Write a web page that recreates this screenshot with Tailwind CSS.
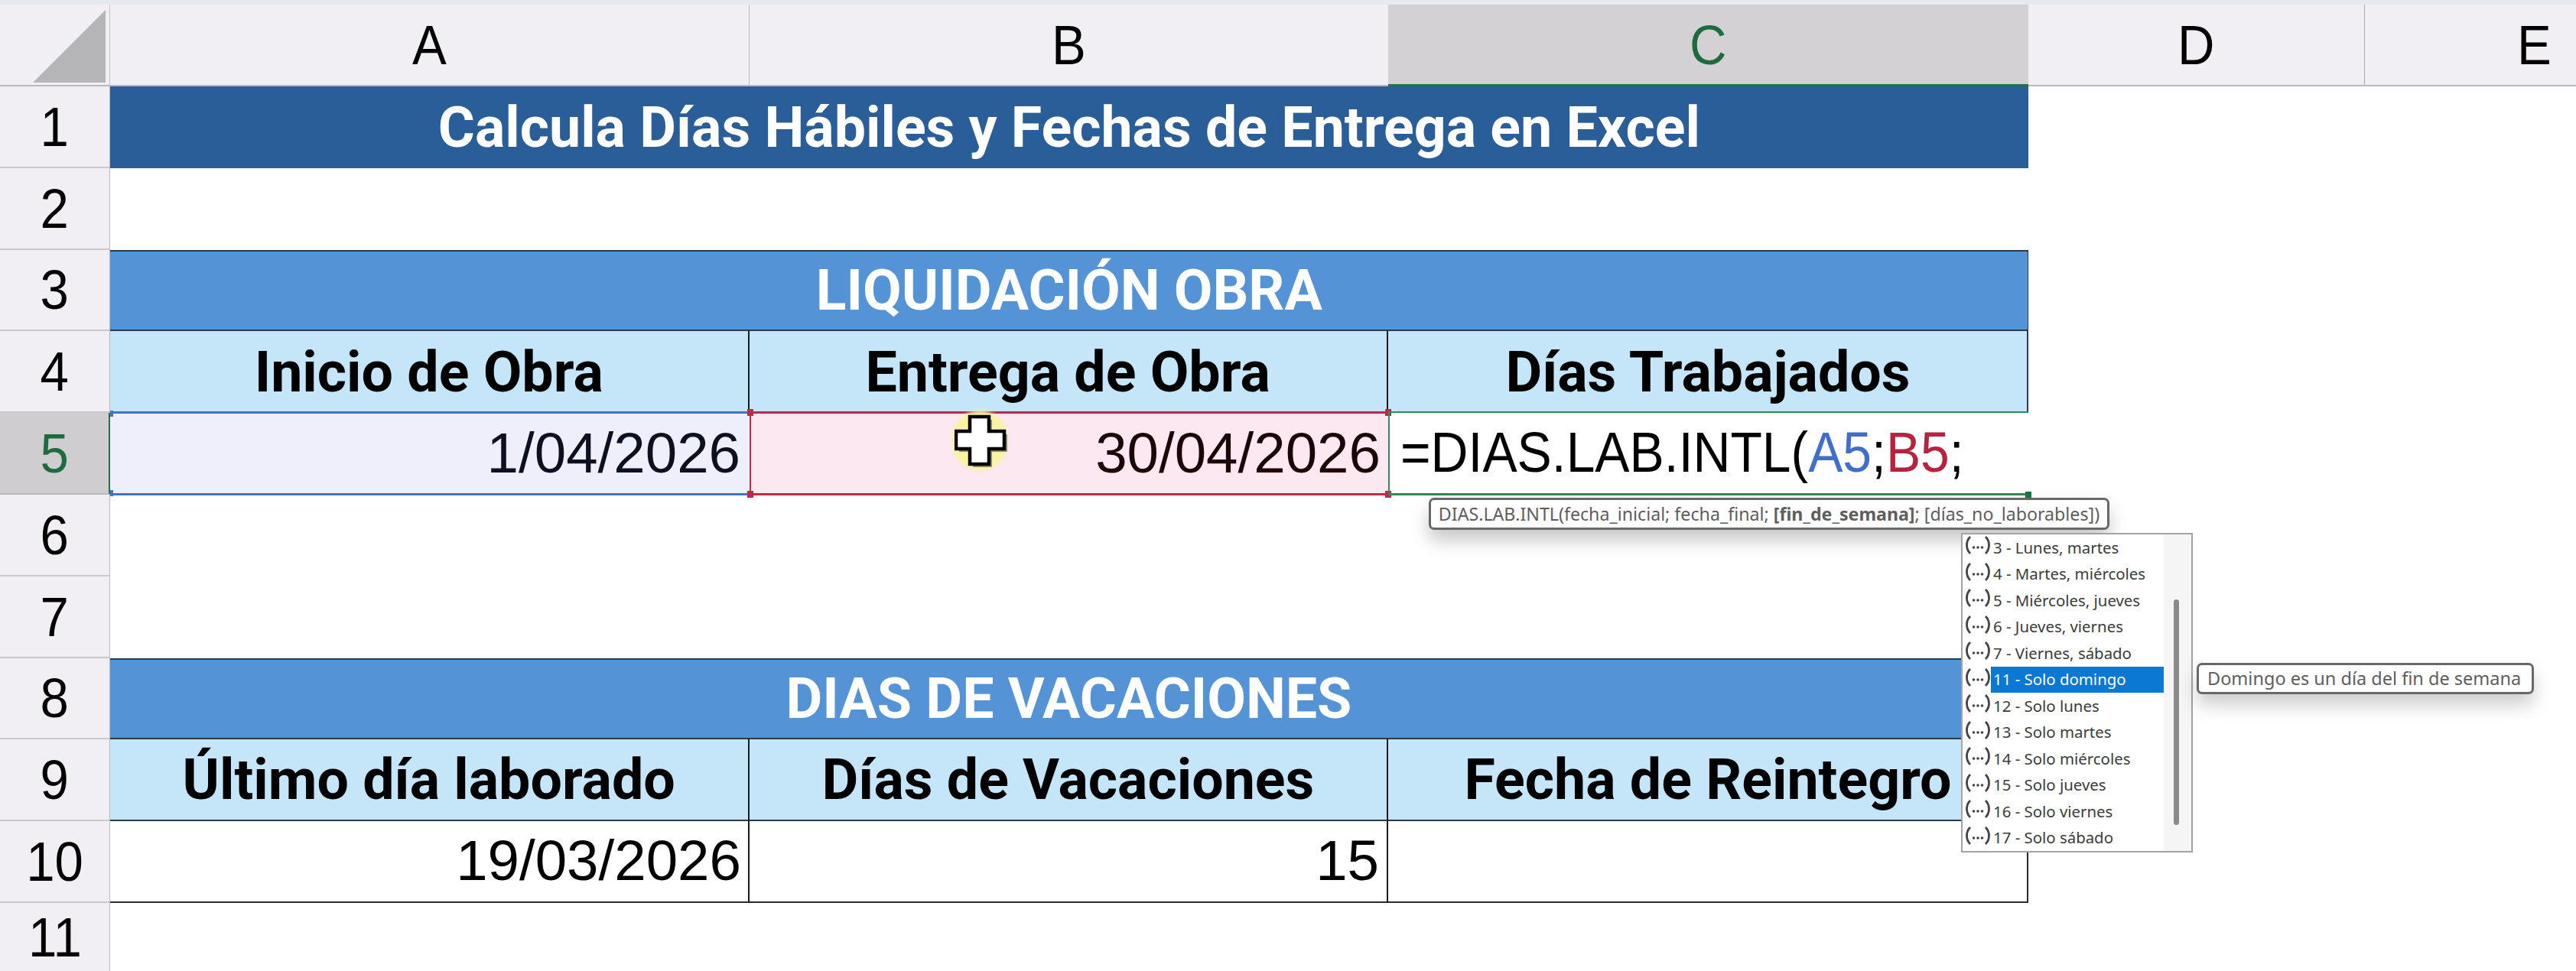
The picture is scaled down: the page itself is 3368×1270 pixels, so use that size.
<!DOCTYPE html>
<html lang="es">
<head>
<meta charset="UTF-8">
<title>Calcula Días Hábiles</title>
<script src="https://cdn.jsdelivr.net/npm/@tailwindcss/browser@4"></script>
</head>
<body class="bg-white overflow-hidden">
<svg class="hidden">
  <symbol id="fx" viewBox="0 0 34 24">
    <path d="M7 1C1 7 1 17 7 23M27 1C33 7 33 17 27 23" fill="none" stroke="#444" stroke-width="2.8"/>
    <circle cx="11.5" cy="15" r="1.8" fill="#444"/><circle cx="17" cy="15" r="1.8" fill="#444"/><circle cx="22.5" cy="15" r="1.8" fill="#444"/>
  </symbol>
</svg>

<div class="relative w-[3368px] h-[1270px] overflow-hidden">
  <!-- window edge above the column headers -->
  <div class="h-[6px] bg-[#e8e9f0]"></div>

  <!-- sheet -->
  <div class="grid grid-cols-[144px_836px_835px_837px_440px_442px] grid-rows-[107px_repeat(10,106.8px)_90px] font-['Liberation_Sans',sans-serif] text-[73px] leading-none text-black">
    <!-- column headers -->
    <div class="relative bg-[#f1eff3] border-b-2 border-b-[#b9b9bb] border-r border-r-[#c4c4c6]">
      <svg class="absolute left-[43px] top-[7px]" width="96" height="96" viewBox="0 0 96 96"><path d="M0 95L95 0V95Z" fill="#b6b5b7"/></svg>
    </div>
    <div class="flex items-center justify-center bg-[#f1eff3] border-b-2 border-b-[#b9b9bb] border-r border-r-[#bdbdbf]"><span class="scale-x-[0.92]">A</span></div>
    <div class="flex items-center justify-center bg-[#f1eff3] border-b-2 border-b-[#b9b9bb]"><span class="scale-x-[0.92]">B</span></div>
    <div class="flex items-center justify-center bg-[#d3d1d4] border-b-[3px] border-b-[#217346] text-[#1f6b3f]"><span class="scale-x-[0.92]">C</span></div>
    <div class="flex items-center justify-center bg-[#f1eff3] border-b-2 border-b-[#b9b9bb] border-r border-r-[#a9a9ab]"><span class="scale-x-[0.92]">D</span></div>
    <div class="flex items-center justify-center bg-[#f1eff3] border-b-2 border-b-[#b9b9bb]"><span class="scale-x-[0.92]">E</span></div>

    <!-- row 1 -->
    <div class="flex items-center justify-center bg-[#f1eff3] border-b-2 border-b-[#c9c9cb] border-r border-r-[#b9b9bb]"><span class="scale-x-[0.92]">1</span></div>
    <div class="col-span-3 flex items-center justify-center bg-[#2a5e98] text-white font-['Roboto',sans-serif] font-bold text-[75px]"><span class="whitespace-nowrap scale-x-[0.98]">Calcula Días Hábiles y Fechas de Entrega en Excel</span></div>
    <div class="col-span-2"></div>

    <!-- row 2 -->
    <div class="flex items-center justify-center bg-[#f1eff3] border-b-2 border-b-[#c9c9cb] border-r border-r-[#b9b9bb]"><span class="scale-x-[0.92]">2</span></div>
    <div class="col-span-5"></div>

    <!-- row 3 -->
    <div class="flex items-center justify-center bg-[#f1eff3] border-b-2 border-b-[#c9c9cb] border-r border-r-[#b9b9bb]"><span class="scale-x-[0.92]">3</span></div>
    <div class="col-span-3 flex items-center justify-center bg-[#5593d7] text-white font-['Roboto',sans-serif] font-bold text-[75px] border-y-2 border-r border-[#2b3a4a]"><span class="whitespace-nowrap scale-x-[0.98]">LIQUIDACIÓN OBRA</span></div>
    <div class="col-span-2"></div>

    <!-- row 4 -->
    <div class="flex items-center justify-center bg-[#f1eff3] border-b-2 border-b-[#c9c9cb] border-r border-r-[#b9b9bb]"><span class="scale-x-[0.92]">4</span></div>
    <div class="flex items-center justify-center bg-[#c5e6f8] font-['Roboto',sans-serif] font-bold text-[75px] border-r-2 border-r-[#1a1a1a]"><span class="whitespace-nowrap scale-x-[0.98]">Inicio de Obra</span></div>
    <div class="flex items-center justify-center bg-[#c5e6f8] font-['Roboto',sans-serif] font-bold text-[75px] border-r-2 border-r-[#1a1a1a]"><span class="whitespace-nowrap scale-x-[0.98]">Entrega de Obra</span></div>
    <div class="flex items-center justify-center bg-[#c5e6f8] font-['Roboto',sans-serif] font-bold text-[75px] border-r-2 border-r-[#2b3a4a]"><span class="whitespace-nowrap scale-x-[0.98]">Días Trabajados</span></div>
    <div class="col-span-2"></div>

    <!-- row 5 -->
    <div class="flex items-center justify-center bg-[#cfcdd0] border-b-2 border-b-[#b9b9bb] border-r-2 border-r-[#217346] text-[#1f6b3f]"><span class="scale-x-[0.92]">5</span></div>
    <div class="relative -mt-[2px] -mb-[1px] flex items-center justify-end pr-[12px] bg-[#efeefb] border-y-[3px] border-y-[#4472c4] text-[74.5px] text-[#0c1020]">
      1/04/2026
      <span class="absolute left-0 top-[-4px] w-[4px] h-[8px] bg-[#4472c4]"></span>
      <span class="absolute left-0 bottom-[-4px] w-[4px] h-[8px] bg-[#4472c4]"></span>
    </div>
    <div class="relative -mt-[2px] -mb-[1px] flex items-center justify-end pr-[10px] bg-[#fbe8f0] border-y-[3px] border-y-[#b92b47] border-l-2 border-l-[#b92b47] text-[74.5px] text-[#1c0508]">
      30/04/2026
      <span class="absolute left-[-5px] top-[-6px] w-[8px] h-[9px] bg-[#b92b47]"></span>
      <span class="absolute left-[-5px] bottom-[-6px] w-[8px] h-[9px] bg-[#b92b47]"></span>
      <span class="absolute right-[-4px] top-[-6px] w-[8px] h-[9px] bg-[#b92b47]"></span>
      <span class="absolute right-[-4px] bottom-[-6px] w-[8px] h-[9px] bg-[#b92b47]"></span>
    </div>
    <div class="relative -mt-[2px] -mb-[1px] flex items-center pl-[14px] border-t-2 border-b-[3px] border-y-[#2f8a57] border-l-2 border-l-[#2f8a57] text-[74.5px]">
      <span class="whitespace-nowrap origin-left scale-x-[0.91]">=DIAS.LAB.INTL(<span class="text-[#3f6fc8]">A5</span>;<span class="text-[#b5233f]">B5</span>;</span>
      <span class="absolute right-[-4px] bottom-[-6px] w-[8px] h-[8px] bg-[#217346]"></span>
    </div>
    <div class="col-span-2"></div>

    <!-- rows 6, 7 -->
    <div class="flex items-center justify-center bg-[#f1eff3] border-b-2 border-b-[#c9c9cb] border-r border-r-[#b9b9bb]"><span class="scale-x-[0.92]">6</span></div>
    <div class="col-span-5"></div>
    <div class="flex items-center justify-center bg-[#f1eff3] border-b-2 border-b-[#c9c9cb] border-r border-r-[#b9b9bb]"><span class="scale-x-[0.92]">7</span></div>
    <div class="col-span-5"></div>

    <!-- row 8 -->
    <div class="flex items-center justify-center bg-[#f1eff3] border-b-2 border-b-[#c9c9cb] border-r border-r-[#b9b9bb]"><span class="scale-x-[0.92]">8</span></div>
    <div class="col-span-3 flex items-center justify-center bg-[#5593d7] text-white font-['Roboto',sans-serif] font-bold text-[75px] border-y-2 border-r border-[#2b3a4a]"><span class="whitespace-nowrap scale-x-[0.98]">DIAS DE VACACIONES</span></div>
    <div class="col-span-2"></div>

    <!-- row 9 -->
    <div class="flex items-center justify-center bg-[#f1eff3] border-b-2 border-b-[#c9c9cb] border-r border-r-[#b9b9bb]"><span class="scale-x-[0.92]">9</span></div>
    <div class="flex items-center justify-center bg-[#c5e6f8] font-['Roboto',sans-serif] font-bold text-[75px] border-b-2 border-b-[#2b3a4a] border-r-2 border-r-[#1a1a1a]"><span class="whitespace-nowrap scale-x-[0.98]">Último día laborado</span></div>
    <div class="flex items-center justify-center bg-[#c5e6f8] font-['Roboto',sans-serif] font-bold text-[75px] border-b-2 border-b-[#2b3a4a] border-r-2 border-r-[#1a1a1a]"><span class="whitespace-nowrap scale-x-[0.98]">Días de Vacaciones</span></div>
    <div class="flex items-center justify-center bg-[#c5e6f8] font-['Roboto',sans-serif] font-bold text-[75px] border-b-2 border-b-[#2b3a4a] border-r-2 border-r-[#2b3a4a]"><span class="whitespace-nowrap scale-x-[0.98]">Fecha de Reintegro</span></div>
    <div class="col-span-2"></div>

    <!-- row 10 -->
    <div class="flex items-center justify-center bg-[#f1eff3] border-b-2 border-b-[#c9c9cb] border-r border-r-[#b9b9bb]"><span class="scale-x-[0.92]">10</span></div>
    <div class="flex items-center justify-end pr-[9px] border-b-2 border-b-[#2b2b2b] border-r-2 border-r-[#1a1a1a] text-[74.5px]">19/03/2026</div>
    <div class="flex items-center justify-end pr-[10px] border-b-2 border-b-[#2b2b2b] border-r-2 border-r-[#1a1a1a] text-[74.5px]">15</div>
    <div class="border-b-2 border-b-[#2b2b2b] border-r-2 border-r-[#2b2b2b]"></div>
    <div class="col-span-2"></div>

    <!-- row 11 -->
    <div class="flex items-center justify-center bg-[#f1eff3] border-r border-r-[#b9b9bb]"><span class="scale-x-[0.92]">11</span></div>
    <div class="col-span-5"></div>
  </div>

  <!-- cell cursor -->
  <div class="absolute left-[1245px] top-[537px] w-[72px] h-[78px] rounded-full bg-[#f8f3a0] blur-[2px]"></div>
  <svg class="absolute left-[1248px] top-[542px]" width="72" height="72" viewBox="0 0 72 72">
    <path d="M21 4H46V23H66V46H46V66H21V46H3V23H21Z" fill="#000" opacity=".4" transform="translate(3 3)"/>
    <path d="M20 3H45V22H65V45H45V65H20V45H2V22H20Z" fill="#fff" stroke="#000" stroke-width="4.5"/>
  </svg>

  <!-- function hint -->
  <div class="absolute left-[1868px] top-[651px] w-[890px] h-[42px] flex items-center justify-center rounded-[7px] border-[3px] border-[#686868] bg-white shadow-[0_14px_24px_rgba(0,0,0,0.22)] font-['Noto_Sans',sans-serif] text-[23.2px] text-[#5e5e5e]"><span class="whitespace-nowrap">DIAS.LAB.INTL(fecha_inicial; fecha_final; <b class="font-bold">[fin_de_semana]</b>; [días_no_laborables])</span></div>

  <!-- autocomplete list -->
  <div class="absolute left-[2564px] top-[697px] w-[303px] h-[418px] flex border-2 border-[#a3a3a3] bg-white font-['Noto_Sans',sans-serif] text-[20.4px] whitespace-nowrap text-[#3b3b3b]">
    <ul class="w-[263px] flex flex-col">
      <li class="flex items-center h-[34.7px]"><svg class="ml-[3px] -mt-[6px] w-[34px] h-[24px] shrink-0"><use href="#fx"/></svg><span class="px-[3px]">3 - Lunes, martes</span></li>
      <li class="flex items-center h-[34.7px]"><svg class="ml-[3px] -mt-[6px] w-[34px] h-[24px] shrink-0"><use href="#fx"/></svg><span class="px-[3px]">4 - Martes, miércoles</span></li>
      <li class="flex items-center h-[34.7px]"><svg class="ml-[3px] -mt-[6px] w-[34px] h-[24px] shrink-0"><use href="#fx"/></svg><span class="px-[3px]">5 - Miércoles, jueves</span></li>
      <li class="flex items-center h-[34.7px]"><svg class="ml-[3px] -mt-[6px] w-[34px] h-[24px] shrink-0"><use href="#fx"/></svg><span class="px-[3px]">6 - Jueves, viernes</span></li>
      <li class="flex items-center h-[34.7px]"><svg class="ml-[3px] -mt-[6px] w-[34px] h-[24px] shrink-0"><use href="#fx"/></svg><span class="px-[3px]">7 - Viernes, sábado</span></li>
      <li class="flex items-center h-[34.7px]"><svg class="ml-[3px] -mt-[6px] w-[34px] h-[24px] shrink-0"><use href="#fx"/></svg><span class="flex-1 self-stretch flex items-center px-[3px] bg-[#0b78d4] text-white">11 - Solo domingo</span></li>
      <li class="flex items-center h-[34.7px]"><svg class="ml-[3px] -mt-[6px] w-[34px] h-[24px] shrink-0"><use href="#fx"/></svg><span class="px-[3px]">12 - Solo lunes</span></li>
      <li class="flex items-center h-[34.7px]"><svg class="ml-[3px] -mt-[6px] w-[34px] h-[24px] shrink-0"><use href="#fx"/></svg><span class="px-[3px]">13 - Solo martes</span></li>
      <li class="flex items-center h-[34.7px]"><svg class="ml-[3px] -mt-[6px] w-[34px] h-[24px] shrink-0"><use href="#fx"/></svg><span class="px-[3px]">14 - Solo miércoles</span></li>
      <li class="flex items-center h-[34.7px]"><svg class="ml-[3px] -mt-[6px] w-[34px] h-[24px] shrink-0"><use href="#fx"/></svg><span class="px-[3px]">15 - Solo jueves</span></li>
      <li class="flex items-center h-[34.7px]"><svg class="ml-[3px] -mt-[6px] w-[34px] h-[24px] shrink-0"><use href="#fx"/></svg><span class="px-[3px]">16 - Solo viernes</span></li>
      <li class="flex items-center h-[34.7px]"><svg class="ml-[3px] -mt-[6px] w-[34px] h-[24px] shrink-0"><use href="#fx"/></svg><span class="px-[3px]">17 - Solo sábado</span></li>
    </ul>
    <div class="relative flex-1 bg-[#f5f5f6]">
      <div class="absolute left-[13px] top-[85px] w-[7px] h-[295px] rounded-full bg-[#8a8a8a]"></div>
    </div>
  </div>

  <!-- item description -->
  <div class="absolute left-[2872px] top-[867px] w-[441px] h-[41px] flex items-center pl-[11px] whitespace-nowrap rounded-[7px] border-[3px] border-[#686868] bg-white shadow-[0_14px_24px_rgba(0,0,0,0.2)] font-['Noto_Sans',sans-serif] text-[23.5px] text-[#5e5e5e]">Domingo es un día del fin de semana</div>
</div>
</body>
</html>
